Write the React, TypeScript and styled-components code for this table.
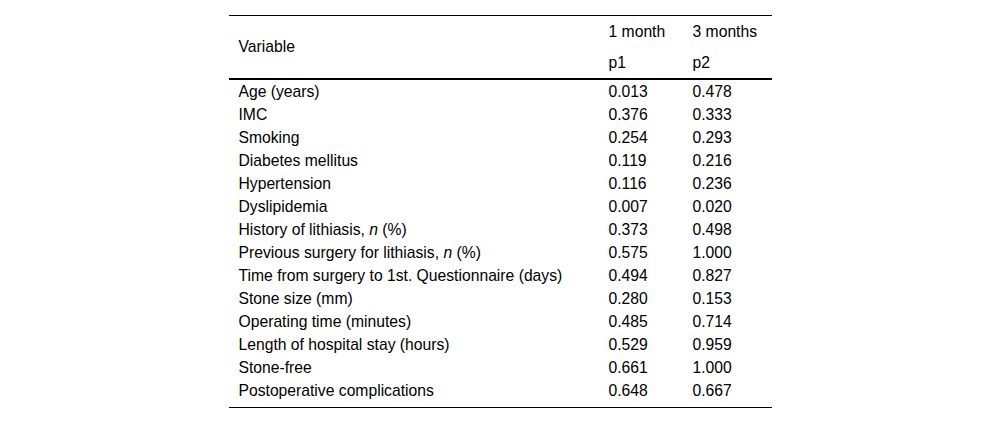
import React from "react";
import styled, { createGlobalStyle } from "styled-components";

const Global = createGlobalStyle`
  html, body { margin: 0; padding: 0; background: #fff; }
  body { font-family: "Liberation Sans", Arial, sans-serif; color: #000; }
`;

const Page = styled.div`
  padding-top: 15px;
  display: flex;
  justify-content: center;
`;

const Table = styled.div`
  width: 543px;
  border-top: 1px solid #000;
  border-bottom: 1px solid #000;
  font-size: 15.7px;
`;

const Head = styled.div`
  display: grid;
  grid-template-columns: 370px 84px 89px;
  grid-template-rows: 31px 31px;
  border-bottom: 2px solid #000;
`;

const HeadCell = styled.div<{ $span?: boolean }>`
  padding-left: 10px;
  display: flex;
  align-items: center;
  grid-row: ${(p) => (p.$span ? "1 / span 2" : "auto")};
`;

const Body = styled.div`
  padding-bottom: 5px;
`;

const Row = styled.div`
  display: grid;
  grid-template-columns: 370px 84px 89px;
  height: 23px;
  align-items: center;
`;

const Cell = styled.div`
  padding-left: 10px;
  white-space: nowrap;
`;

const rows: [React.ReactNode, string, string][] = [
  ["Age (years)", "0.013", "0.478"],
  ["IMC", "0.376", "0.333"],
  ["Smoking", "0.254", "0.293"],
  ["Diabetes mellitus", "0.119", "0.216"],
  ["Hypertension", "0.116", "0.236"],
  ["Dyslipidemia", "0.007", "0.020"],
  [<>History of lithiasis, <i>n</i> (%)</>, "0.373", "0.498"],
  [<>Previous surgery for lithiasis, <i>n</i> (%)</>, "0.575", "1.000"],
  ["Time from surgery to 1st. Questionnaire (days)", "0.494", "0.827"],
  ["Stone size (mm)", "0.280", "0.153"],
  ["Operating time (minutes)", "0.485", "0.714"],
  ["Length of hospital stay (hours)", "0.529", "0.959"],
  ["Stone-free", "0.661", "1.000"],
  ["Postoperative complications", "0.648", "0.667"],
];

export default function App() {
  return (
    <>
      <Global />
      <Page>
        <Table>
          <Head>
            <HeadCell $span>Variable</HeadCell>
            <HeadCell>1 month</HeadCell>
            <HeadCell>3 months</HeadCell>
            <HeadCell>p1</HeadCell>
            <HeadCell>p2</HeadCell>
          </Head>
          <Body>
            {rows.map((r, i) => (
              <Row key={i}>
                <Cell>{r[0]}</Cell>
                <Cell>{r[1]}</Cell>
                <Cell>{r[2]}</Cell>
              </Row>
            ))}
          </Body>
        </Table>
      </Page>
    </>
  );
}
